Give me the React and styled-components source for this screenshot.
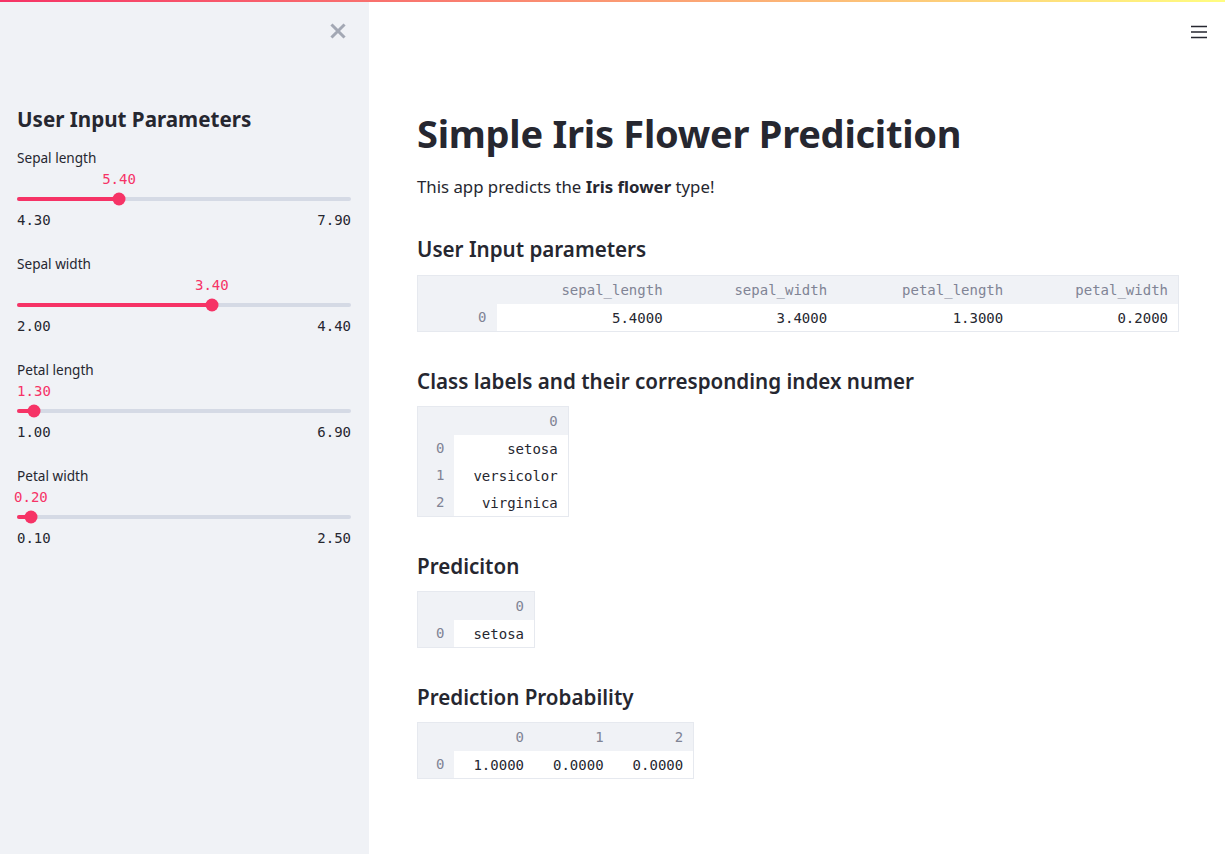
import React from 'react';
import styled, { createGlobalStyle } from 'styled-components';

const GlobalStyle = createGlobalStyle`
  html, body {
    margin: 0;
    padding: 0;
    background: #ffffff;
    font-family: "Noto Sans", "Open Sans", sans-serif;
    color: #262730;
  }
  * { box-sizing: border-box; }
`;

const Page = styled.div`
  display: flex;
  flex-direction: column;
  height: 100vh;
  overflow: hidden;
`;

const Decoration = styled.div`
  height: 2px;
  flex: 0 0 2px;
  background: linear-gradient(90deg, #f63366, #fffd80);
`;

const Body = styled.div`
  display: flex;
  flex: 1;
  min-height: 0;
`;

const Sidebar = styled.aside`
  flex: 0 0 369px;
  background: #f0f2f6;
  padding: 0 18px 0 17px;
`;

const CloseRow = styled.div`
  display: flex;
  justify-content: flex-end;
  align-items: flex-start;
  padding: 21px 5px 0 0;
  height: 104px;
`;

const IconButton = styled.button`
  background: none;
  border: none;
  padding: 0;
  margin: 0;
  cursor: pointer;
  display: flex;
  align-items: center;
  justify-content: center;
  color: ${p => p.muted ? '#a3a8b4' : '#262730'};
`;

const SideTitle = styled.h2`
  margin: 0 0 16px;
  font-size: 20.6px;
  font-weight: 700;
  line-height: 26px;
`;

const SliderBlock = styled.div`
  height: 106px;
`;

const SliderLabel = styled.div`
  font-size: 13.6px;
  line-height: 20px;
  margin-bottom: 1px;
`;

const ValueRow = styled.div`
  position: relative;
  height: 20px;
`;

const ValueText = styled.span`
  position: absolute;
  top: 0;
  transform: translateX(-50%);
  font-family: "DejaVu Sans Mono", "Liberation Mono", monospace;
  font-size: 14px;
  line-height: 20px;
  color: #f63366;
  white-space: nowrap;
`;

const Track = styled.div`
  position: relative;
  height: 4px;
  margin: 8px 0 9px;
  border-radius: 2px;
  background: #d5dae5;
`;

const Fill = styled.div`
  height: 100%;
  border-radius: 2px;
  background: #f63366;
`;

const Thumb = styled.div`
  position: absolute;
  top: 50%;
  width: 13px;
  height: 13px;
  border-radius: 50%;
  background: #f63366;
  transform: translate(-50%, -50%);
`;

const RangeRow = styled.div`
  display: flex;
  justify-content: space-between;
  font-family: "DejaVu Sans Mono", "Liberation Mono", monospace;
  font-size: 14px;
  line-height: 20px;
`;

const Main = styled.main`
  flex: 1;
  display: flex;
  flex-direction: column;
  min-width: 0;
`;

const TopBar = styled.div`
  display: flex;
  justify-content: flex-end;
  align-items: flex-start;
  padding: 22px 17px 0 0;
  height: 103px;
`;

const Content = styled.div`
  padding: 0 46px 0 48px;
`;

const Title = styled.h1`
  margin: 0;
  font-size: 38px;
  font-weight: 700;
  line-height: 56px;
  letter-spacing: -0.25px;
`;

const Lead = styled.p`
  margin: 14px 0 0;
  font-size: 16.8px;
  line-height: 24px;
`;

const SectionTitle = styled.h3`
  margin: ${p => p.first ? '35px' : '34px'} 0 ${p => p.first ? '11px' : '10px'};
  font-size: 20.6px;
  font-weight: 600;
  line-height: 30px;
`;

const Table = styled.table`
  border-collapse: collapse;
  width: ${p => p.full ? '100%' : 'auto'};
  font-family: "DejaVu Sans Mono", "Liberation Mono", monospace;
  font-size: 14px;
  border: 1px solid #e6e9ef;
`;

const Th = styled.th`
  background: #f0f2f6;
  color: #808495;
  font-weight: 400;
  text-align: right;
  padding: 0 10px 0 18px;
  height: ${p => p.body ? '27px' : '28px'};
  line-height: ${p => p.body ? '27px' : '28px'};
  white-space: nowrap;
`;

const Td = styled.td`
  background: #ffffff;
  color: #262730;
  text-align: right;
  padding: 0 10px 0 19px;
  height: 27px;
  white-space: nowrap;
`;

function Slider({ label, min, max, value }) {
  const frac = (value - min) / (max - min);
  const pct = `${frac * 100}%`;
  return (
    <SliderBlock>
      <SliderLabel>{label}</SliderLabel>
      <ValueRow>
        <ValueText style={{ left: pct }}>{value.toFixed(2)}</ValueText>
      </ValueRow>
      <Track>
        <Fill style={{ width: pct }} />
        <Thumb style={{ left: pct }} />
      </Track>
      <RangeRow>
        <span>{min.toFixed(2)}</span>
        <span>{max.toFixed(2)}</span>
      </RangeRow>
    </SliderBlock>
  );
}

function DataFrame({ columns, rows, full, indexWidth }) {
  return (
    <Table full={full}>
      <thead>
        <tr>
          <Th style={indexWidth ? { width: indexWidth } : undefined}></Th>
          {columns.map(c => <Th key={c}>{c}</Th>)}
        </tr>
      </thead>
      <tbody>
        {rows.map((r, i) => (
          <tr key={i}>
            <Th body>{i}</Th>
            {r.map((v, j) => <Td key={j}>{v}</Td>)}
          </tr>
        ))}
      </tbody>
    </Table>
  );
}

const sliders = [
  { label: 'Sepal length', min: 4.3, max: 7.9, value: 5.4 },
  { label: 'Sepal width', min: 2.0, max: 4.4, value: 3.4 },
  { label: 'Petal length', min: 1.0, max: 6.9, value: 1.3 },
  { label: 'Petal width', min: 0.1, max: 2.5, value: 0.2 },
];

export default function App() {
  return (
    <Page>
      <GlobalStyle />
      <Decoration />
      <Body>
        <Sidebar>
          <CloseRow>
            <IconButton muted aria-label="Close sidebar">
              <svg width="16" height="16" viewBox="0 0 16 16">
                <path d="M2.5 2.5 L13.5 13.5 M13.5 2.5 L2.5 13.5" stroke="currentColor" strokeWidth="3" strokeLinecap="square" />
              </svg>
            </IconButton>
          </CloseRow>
          <SideTitle>User Input Parameters</SideTitle>
          {sliders.map(s => <Slider key={s.label} {...s} />)}
        </Sidebar>
        <Main>
          <TopBar>
            <IconButton aria-label="Menu">
              <svg width="18" height="16" viewBox="0 0 18 16">
                <path d="M1 2.5h16M1 8h16M1 13.5h16" stroke="currentColor" strokeWidth="1.7" />
              </svg>
            </IconButton>
          </TopBar>
          <Content>
            <Title>Simple Iris Flower Predicition</Title>
            <Lead>This app predicts the <b>Iris flower</b> type!</Lead>

            <SectionTitle first>User Input parameters</SectionTitle>
            <DataFrame
              full
              indexWidth="79px"
              columns={['sepal_length', 'sepal_width', 'petal_length', 'petal_width']}
              rows={[['5.4000', '3.4000', '1.3000', '0.2000']]}
            />

            <SectionTitle>Class labels and their corresponding index numer</SectionTitle>
            <DataFrame columns={['0']} rows={[['setosa'], ['versicolor'], ['virginica']]} />

            <SectionTitle>Prediciton</SectionTitle>
            <DataFrame columns={['0']} rows={[['setosa']]} />

            <SectionTitle>Prediction Probability</SectionTitle>
            <DataFrame columns={['0', '1', '2']} rows={[['1.0000', '0.0000', '0.0000']]} />
          </Content>
        </Main>
      </Body>
    </Page>
  );
}
